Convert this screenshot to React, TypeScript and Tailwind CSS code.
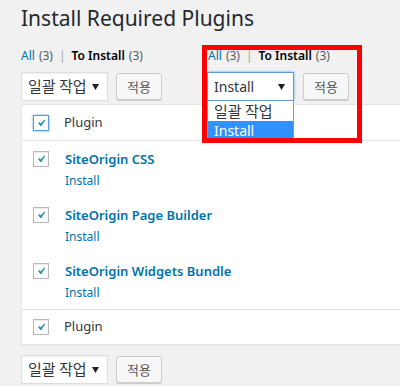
import React from "react";

const font = { fontFamily: '"Noto Sans", "Noto Sans CJK KR", sans-serif' };
const kr = { fontFamily: '"Noto Sans CJK KR", "Noto Sans", sans-serif' };

function Check({ focus = false }: { focus?: boolean }) {
  return (
    <div
      className={
        "w-[16px] h-[16px] bg-white flex items-center justify-center shrink-0 border " +
        (focus ? "border-[#5b9dd9] shadow-[0_0_2px_rgba(30,140,190,0.8)]" : "border-[#b4b9be] shadow-[inset_0_1px_2px_rgba(0,0,0,0.1)]")
      }
    >
      <svg width="16" height="16" viewBox="0 0 20 20">
        <path d="M14.83 4.89l1.34.94-5.81 8.38H9.02L5.78 9.67l1.34-1.25 2.57 2.4z" fill="#1e8cbe" />
      </svg>
    </div>
  );
}

function Links() {
  return (
    <div className="h-[20px] flex items-center text-[12px] leading-[20px] whitespace-nowrap">
      <span className="text-[#0073aa]">All</span>
      <span className="text-[#555d66] ml-[4px]">(3)</span>
      <span className="text-[#a0a5aa] mx-[6px]">|</span>
      <span className="text-black font-semibold">To Install</span>
      <span className="text-[#555d66] ml-[4px]">(3)</span>
    </div>
  );
}

function Arrow() {
  return (
    <svg width="7" height="6" viewBox="0 0 7 6">
      <path d="M0 0h7L3.5 6z" fill="#222" />
    </svg>
  );
}

function BulkSelect({ label, focus = false, korean = false }: { label: string; focus?: boolean; korean?: boolean }) {
  return (
    <div
      className={
        "w-[87px] h-[29px] bg-white border flex items-center justify-between pl-[6px] pr-[8px] text-[#32373c] " +
        (korean ? "text-[15px] " : "text-[14px] ") +
        (focus ? "border-[#5b9dd9] shadow-[0_0_2px_rgba(30,140,190,0.8)]" : "border-[#ddd] shadow-[inset_0_1px_2px_rgba(0,0,0,0.07)]")
      }
      style={korean ? kr : undefined}
    >
      <span>{label}</span>
      <Arrow />
    </div>
  );
}

function ApplyBtn() {
  return (
    <div
      className="w-[46px] h-[27px] mt-[1px] bg-[#f7f7f7] border border-[#ccc] rounded-[3px] shadow-[0_1px_0_#ccc] flex items-center justify-center text-[13px] text-[#555]"
      style={kr}
    >
      적용
    </div>
  );
}

function Row({ name }: { name: string }) {
  return (
    <div className="h-[56px] flex pl-[11px] pt-[10px]">
      <Check />
      <div className="ml-[16px] -mt-[2px]">
        <div className="text-[13px] leading-[20px] font-semibold text-[#0073aa]">{name}</div>
        <div className="text-[12px] leading-[20px] mt-[2px] text-[#0073aa]">Install</div>
      </div>
    </div>
  );
}

export default function App() {
  return (
    <div className="w-[400px] h-[386px] overflow-hidden bg-[#f1f1f1] pl-[21px]" style={font}>
      <div className="h-[46px] pt-[4px]">
        <h1 className="text-[21px] leading-[29px] text-[#23282d] font-normal whitespace-nowrap">Install Required Plugins</h1>
      </div>
      <div className="flex">
        <div className="w-[186px] shrink-0">
          <Links />
          <div className="flex gap-[8px] mt-[6px]">
            <BulkSelect label="일괄 작업" korean />
            <ApplyBtn />
          </div>
        </div>
        <div className="relative w-[150px] shrink-0">
          <div className="pl-[1px]">
            <Links />
          </div>
          <div className="flex gap-[9px] mt-[6px]">
            <div className="relative">
              <BulkSelect label="Install" focus />
              <div className="absolute left-0 top-[29px] w-[87px] h-[40px] bg-white border border-t-0 border-[#7a9cd3] z-10 text-[14px]">
                <div className="h-[20px] leading-[20px] pl-[6px] text-[#32373c] text-[15px]" style={kr}>일괄 작업</div>
                <div className="h-[19px] leading-[19px] pl-[6px] bg-[#3390ff] text-white">Install</div>
              </div>
            </div>
            <ApplyBtn />
          </div>
          <div className="absolute left-[-5px] top-[-1px] w-[160px] h-[98px] border-[5px] border-[#ff0000] z-20 pointer-events-none" />
        </div>
      </div>
      <div className="mt-[3px] w-[420px] bg-white border border-[#e5e5e5] shadow-[0_1px_1px_rgba(0,0,0,0.04)]">
        <div className="h-[36px] flex items-center pl-[11px] border-b border-[#e1e1e1]">
          <Check focus />
          <span className="ml-[15px] text-[13px] text-[#32373c]">Plugin</span>
        </div>
        <Row name="SiteOrigin CSS" />
        <Row name="SiteOrigin Page Builder" />
        <Row name="SiteOrigin Widgets Bundle" />
        <div className="h-[35px] flex items-center pl-[11px] border-t border-[#e1e1e1]">
          <Check />
          <span className="ml-[15px] text-[13px] text-[#32373c]">Plugin</span>
        </div>
      </div>
      <div className="flex gap-[8px] mt-[10px]">
        <BulkSelect label="일괄 작업" korean />
        <ApplyBtn />
      </div>
    </div>
  );
}
